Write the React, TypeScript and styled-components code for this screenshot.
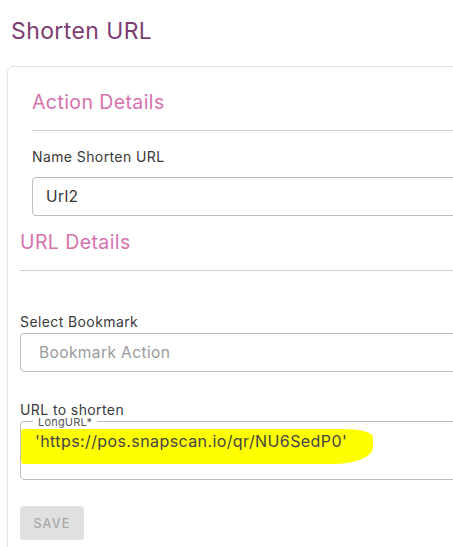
import React from 'react';
import styled, {createGlobalStyle} from 'styled-components';

const GlobalStyle = createGlobalStyle`
  html, body {
    margin: 0;
    padding: 0;
    background: #ffffff;
    overflow: hidden;
  }
  body {
    font-family: Inter, "Open Sans", "Liberation Sans", sans-serif;
    color: #3b3b3b;
    letter-spacing: 0.4px;
  }
`

const Page = styled.div`
  width: 453px;
  height: 547px;
  padding-left: 7px;
  box-sizing: border-box;
  overflow: hidden;
`

const Title = styled.h1`
  margin: 0;
  padding: 15px 0 0 4px;
  font-size: 23px;
  line-height: 32px;
  font-weight: 400;
  color: #7d3d73;
`

const Card = styled.div`
  margin-top: 19px;
  width: 620px;
  height: 520px;
  border: 1px solid #e2e2e2;
  border-radius: 6px 0 0 0;
  box-sizing: border-box;
`

const Section = styled.section<{indent: number}>`
  padding-left: ${p => p.indent}px;
`

const SectionTitle = styled.h2<{top: number}>`
  margin: ${p => p.top}px 0 0;
  font-size: 19.5px;
  line-height: 28px;
  font-weight: 400;
  color: #d672ad;
`

const Divider = styled.hr<{top: number}>`
  margin: ${p => p.top}px 0 0;
  border: none;
  border-top: 1px solid #d0d0d0;
`

const Label = styled.div<{top: number}>`
  margin-top: ${p => p.top}px;
  font-size: 14px;
  line-height: 18px;
  color: #3a3a3a;
`

const TextBox = styled.div<{top: number; placeholder?: boolean}>`
  margin-top: ${p => p.top}px;
  height: 39px;
  border: 1px solid #bdbdbd;
  border-radius: 4px;
  box-sizing: border-box;
  display: flex;
  align-items: center;
  padding-left: ${p => (p.placeholder ? 18 : 13)}px;
  font-size: 15.5px;
  color: ${p => (p.placeholder ? '#9a9a9a' : '#333333')};
`

const Outlined = styled.div`
  position: relative;
  margin-top: 2px;
  height: 59px;
  border: 1px solid #bdbdbd;
  border-radius: 4px;
  box-sizing: border-box;
  padding: 7px 0 0 0;
`

const Legend = styled.span`
  position: absolute;
  top: -4px;
  left: 12px;
  padding: 0 5px;
  background: #ffffff;
  font-size: 11px;
  line-height: 8px;
  color: #555555;
  letter-spacing: 0.2px;
`

const Highlight = styled.span`
  display: inline-block;
  background: #ffff00;
  padding: 2px 26px 13px 14px;
  border-radius: 2px 30px 40px 2px / 2px 8px 16px 6px;
  font-size: 16px;
  line-height: 20px;
  color: #444444;
`

const SaveButton = styled.button`
  margin-top: 26px;
  width: 64px;
  height: 34px;
  border: none;
  border-radius: 4px;
  background: #e0e0e0;
  color: #a8a8a8;
  font-family: inherit;
  font-size: 12.5px;
  font-weight: 500;
  letter-spacing: 1.2px;
`

const App = () => {
    return (
        <Page>
            <GlobalStyle/>
            <Title>Shorten URL</Title>
            <Card>
                <Section indent={24}>
                    <SectionTitle top={21}>Action Details</SectionTitle>
                    <Divider top={14}/>
                    <Label top={17}>Name Shorten URL</Label>
                    <TextBox top={11}>Url2</TextBox>
                </Section>
                <Section indent={12}>
                    <SectionTitle top={12}>URL Details</SectionTitle>
                    <Divider top={14}/>
                    <Label top={42}>Select Bookmark</Label>
                    <TextBox top={2} placeholder>Bookmark Action</TextBox>
                    <Label top={29}>URL to shorten</Label>
                    <Outlined>
                        <Legend>LongURL*</Legend>
                        <Highlight>'https://pos.snapscan.io/qr/NU6SedP0'</Highlight>
                    </Outlined>
                    <SaveButton disabled>SAVE</SaveButton>
                </Section>
            </Card>
        </Page>
    );
};

export default App;
